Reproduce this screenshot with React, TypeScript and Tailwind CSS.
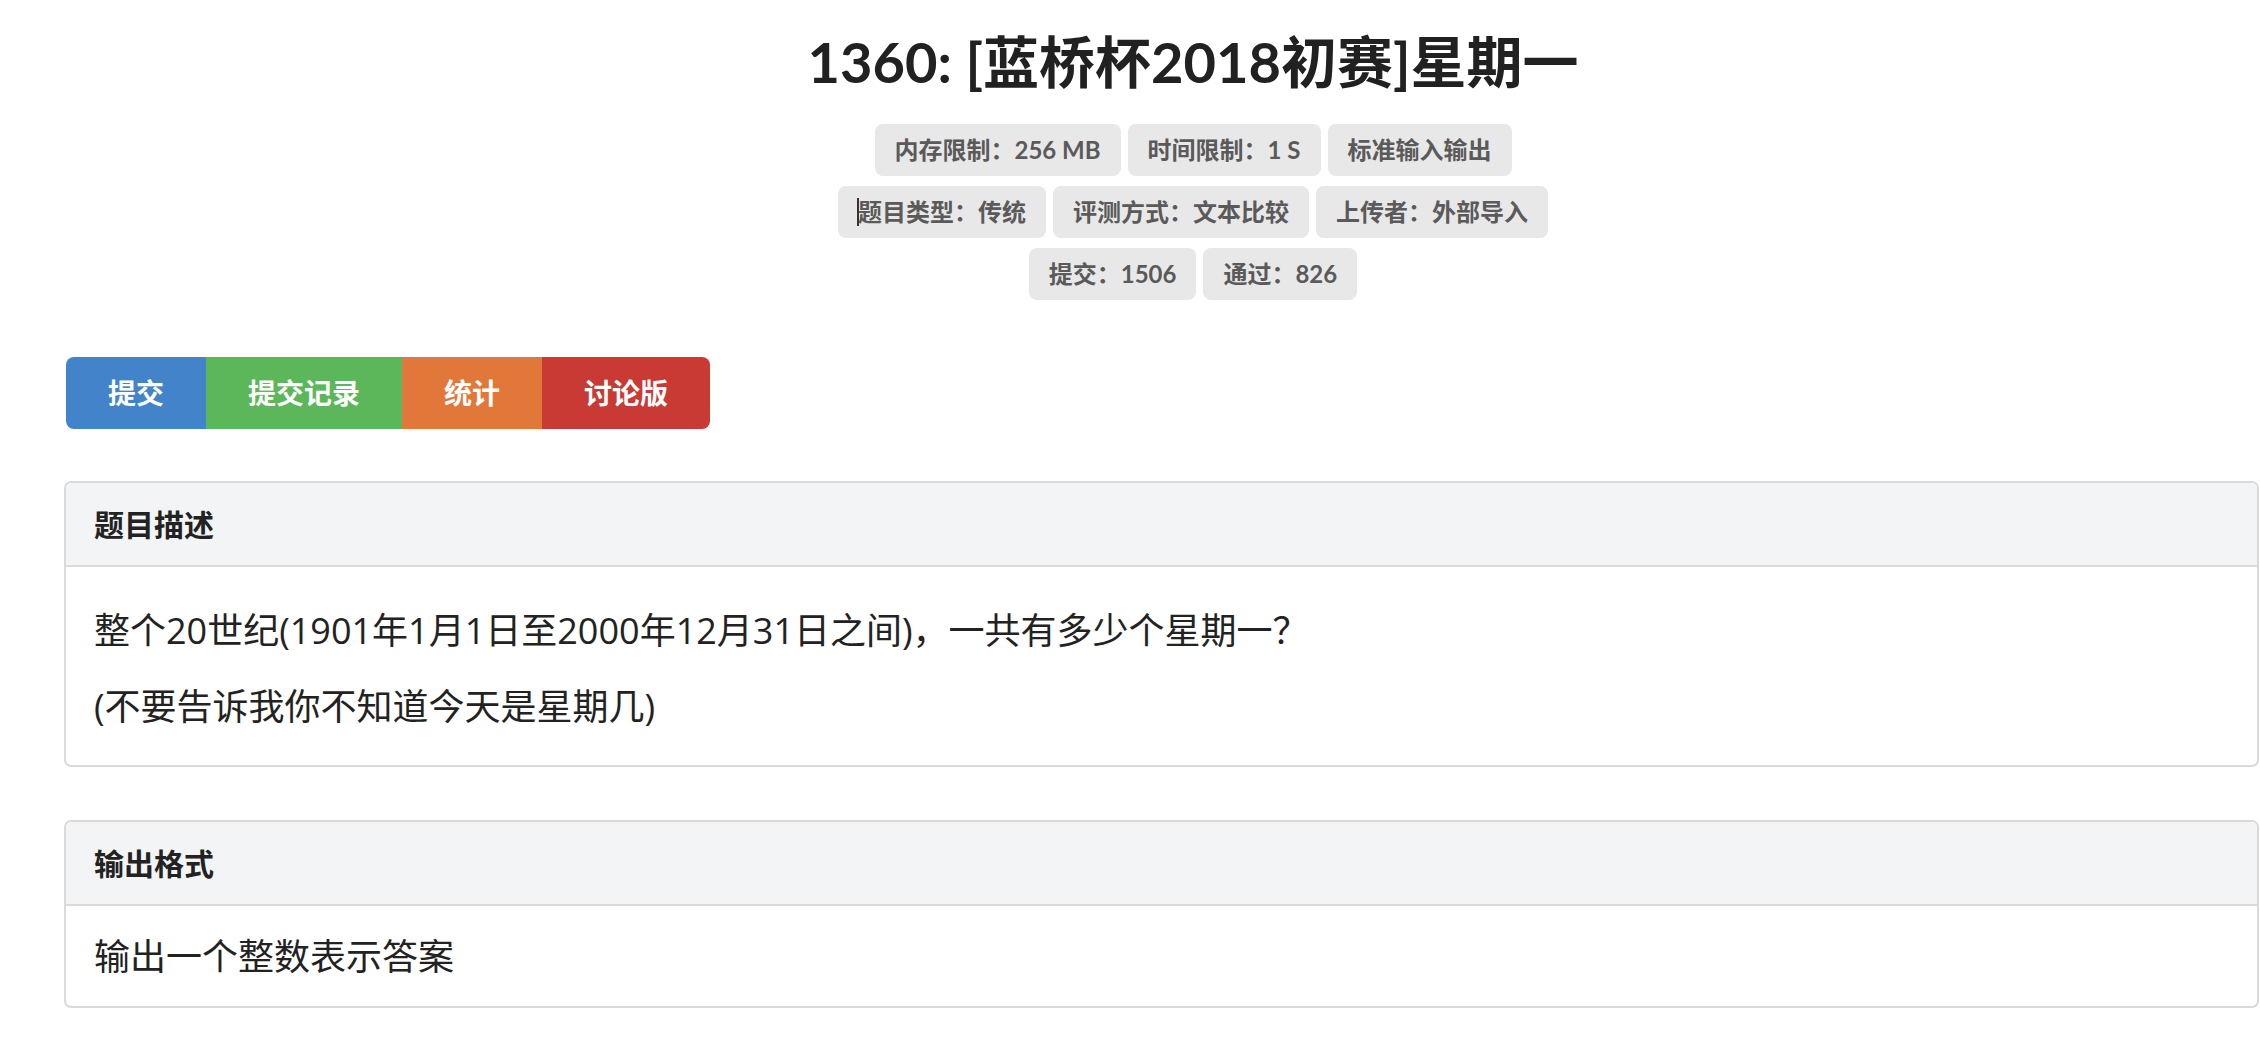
import React from "react";

const badgeRows: string[][] = [
  ["内存限制：256 MB", "时间限制：1 S", "标准输入输出"],
  ["题目类型：传统", "评测方式：文本比较", "上传者：外部导入"],
  ["提交：1506", "通过：826"],
];

function Badge({ text, caret }: { text: string; caret?: boolean }) {
  return (
    <div className="relative rounded-[8px] bg-[#e8e8e8] px-[20px] py-[8px] text-[24px] leading-[36px] font-bold text-[#5a5a5a]">
      {caret && (
        <span className="absolute left-[19px] top-[12px] h-[28px] w-[2px] bg-[#333]" />
      )}
      {text}
    </div>
  );
}

function Panel({
  title,
  children,
  bodyClass,
}: {
  title: string;
  children: React.ReactNode;
  bodyClass: string;
}) {
  return (
    <div className="rounded-[7px] border-2 border-[#dadadb] bg-white">
      <div className="rounded-t-[6px] border-b-2 border-[#dadadb] bg-[#f3f4f5] px-[28px] pt-[19px] pb-[18px] text-[30px] leading-[45px] font-bold text-[#222]">
        {title}
      </div>
      <div
        className={
          "px-[28px] text-[36px] leading-[54px] text-[#222] [font-family:'Open_Sans','Noto_Sans_CJK_SC',sans-serif] " +
          bodyClass
        }
      >
        {children}
      </div>
    </div>
  );
}

export default function App() {
  return (
    <div className="min-h-screen w-full bg-white [font-family:Lato,'Noto_Sans_CJK_SC',sans-serif]">
      <div className="pl-[126px] pt-[28px] flex flex-col items-center">
        <h1 className="text-[56px] leading-[67px] font-bold text-[#212121]">
          1360: [蓝桥杯2018初赛]星期一
        </h1>
        <div className="mt-[29px] flex flex-col items-center gap-y-[10px]">
          {badgeRows.map((row, i) => (
            <div key={i} className="flex gap-x-[7px]">
              {row.map((t, j) => (
                <Badge key={t} text={t} caret={i === 1 && j === 0} />
              ))}
            </div>
          ))}
        </div>
      </div>

      <div className="ml-[66px] mt-[57px] flex">
        <div className="rounded-l-[8px] bg-[#4283c9] px-[42px] py-[15px] text-[28px] leading-[42px] font-bold text-white">
          提交
        </div>
        <div className="bg-[#5bb75a] px-[42px] py-[15px] text-[28px] leading-[42px] font-bold text-white">
          提交记录
        </div>
        <div className="bg-[#e2773a] px-[42px] py-[15px] text-[28px] leading-[42px] font-bold text-white">
          统计
        </div>
        <div className="rounded-r-[8px] bg-[#c93a34] px-[42px] py-[15px] text-[28px] leading-[42px] font-bold text-white">
          讨论版
        </div>
      </div>

      <div className="ml-[64px] mr-[1px] mt-[52px] flex flex-col gap-y-[53px] pb-[40px]">
        <Panel title="题目描述" bodyClass="pt-[37px] pb-[31px]">
          <p>整个20世纪(1901年1月1日至2000年12月31日之间)，一共有多少个星期一？</p>
          <p className="mt-[22px]">(不要告诉我你不知道今天是星期几)</p>
        </Panel>
        <Panel title="输出格式" bodyClass="pt-[24px] pb-[22px]">
          输出一个整数表示答案
        </Panel>
      </div>
    </div>
  );
}
